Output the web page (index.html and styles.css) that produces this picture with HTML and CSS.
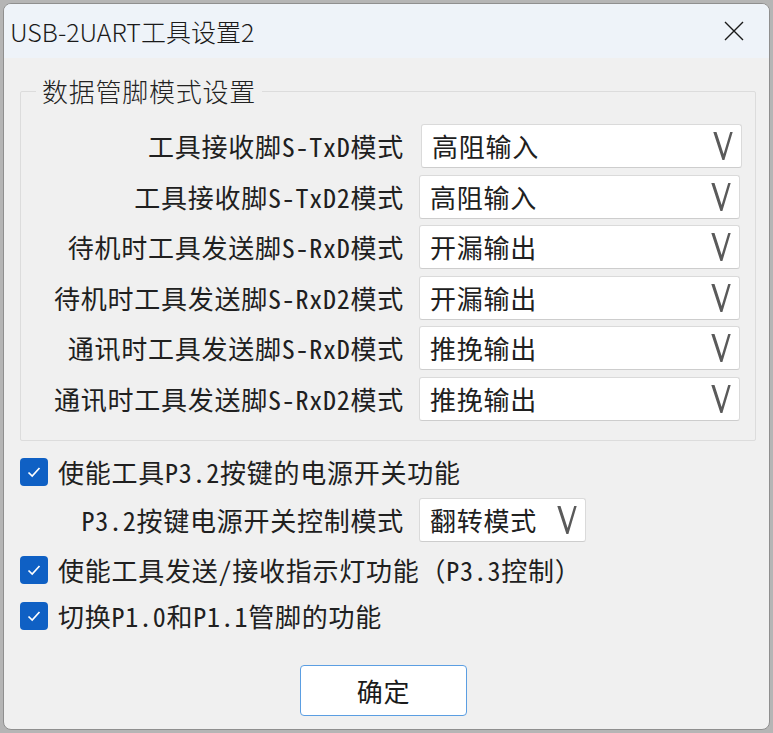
FILE: index.html
```html
<!DOCTYPE html>
<html lang="zh-CN">
<head>
<meta charset="utf-8">
<title>USB-2UART工具设置2</title>
<link rel="stylesheet" href="styles.css">
</head>
<body>
<div class="window">
  <header class="titlebar">
    <span class="title">USB-2UART工具设置2</span>
    <svg class="close" viewBox="0 0 20 20"><path d="M1 1 L19 19 M19 1 L1 19" stroke="#1a1a1a" stroke-width="1.4" fill="none"/></svg>
  </header>
  <main class="content">
    <fieldset class="group">
      <legend class="legend">数据管脚模式设置</legend>
      <div class="rows">
        <div class="row">
          <span class="label">工具接收脚S-TxD模式</span>
          <div class="combo wide shift"><span>高阻输入</span><svg class="chev" viewBox="0 0 20 28"><polygon points="0.3,0 3.5,0 10.6,22 17.2,0 19.7,0 11.4,28 9.4,28"/></svg></div>
        </div>
        <div class="row">
          <span class="label">工具接收脚S-TxD2模式</span>
          <div class="combo wide"><span>高阻输入</span><svg class="chev" viewBox="0 0 20 28"><polygon points="0.3,0 3.5,0 10.6,22 17.2,0 19.7,0 11.4,28 9.4,28"/></svg></div>
        </div>
        <div class="row">
          <span class="label">待机时工具发送脚S-RxD模式</span>
          <div class="combo wide"><span>开漏输出</span><svg class="chev" viewBox="0 0 20 28"><polygon points="0.3,0 3.5,0 10.6,22 17.2,0 19.7,0 11.4,28 9.4,28"/></svg></div>
        </div>
        <div class="row">
          <span class="label">待机时工具发送脚S-RxD2模式</span>
          <div class="combo wide"><span>开漏输出</span><svg class="chev" viewBox="0 0 20 28"><polygon points="0.3,0 3.5,0 10.6,22 17.2,0 19.7,0 11.4,28 9.4,28"/></svg></div>
        </div>
        <div class="row">
          <span class="label">通讯时工具发送脚S-RxD模式</span>
          <div class="combo wide"><span>推挽输出</span><svg class="chev" viewBox="0 0 20 28"><polygon points="0.3,0 3.5,0 10.6,22 17.2,0 19.7,0 11.4,28 9.4,28"/></svg></div>
        </div>
        <div class="row">
          <span class="label">通讯时工具发送脚S-RxD2模式</span>
          <div class="combo wide"><span>推挽输出</span><svg class="chev" viewBox="0 0 20 28"><polygon points="0.3,0 3.5,0 10.6,22 17.2,0 19.7,0 11.4,28 9.4,28"/></svg></div>
        </div>
      </div>
    </fieldset>
    <div class="options">
      <div class="check c1">
        <span class="box"><svg viewBox="0 0 28 28"><polyline points="8.5,14.5 12.2,18 19.5,10" fill="none" stroke="#fff" stroke-width="1.7"/></svg></span>
        <span class="text">使能工具P3.2按键的电源开关功能</span>
      </div>
      <div class="row sub">
        <span class="label">P3.2按键电源开关控制模式</span>
        <div class="combo narrow"><span>翻转模式</span><svg class="chev" viewBox="0 0 20 28"><polygon points="0.3,0 3.5,0 10.6,22 17.2,0 19.7,0 11.4,28 9.4,28"/></svg></div>
      </div>
      <div class="check c2">
        <span class="box"><svg viewBox="0 0 28 28"><polyline points="8.5,14.5 12.2,18 19.5,10" fill="none" stroke="#fff" stroke-width="1.7"/></svg></span>
        <span class="text">使能工具发送/接收指示灯功能（P3.3控制）</span>
      </div>
      <div class="check c3">
        <span class="box"><svg viewBox="0 0 28 28"><polyline points="8.5,14.5 12.2,18 19.5,10" fill="none" stroke="#fff" stroke-width="1.7"/></svg></span>
        <span class="text">切换P1.0和P1.1管脚的功能</span>
      </div>
    </div>
    <div class="actions">
      <button class="btn" type="button">确定</button>
    </div>
  </main>
</div>
</body>
</html>
```

FILE: styles.css
```css
body {
  margin: 0;
  background: #b5b5b5;
  font-family: "Noto Sans Mono CJK SC", "Noto Sans CJK SC", sans-serif;
  color: #1b1b1b;
}

.window {
  box-sizing: border-box;
  width: 767px;
  height: 727px;
  margin: 3px 0 0 3px;
  border: 1px solid #8f8f8f;
  border-radius: 8px;
  background: #f0f0f0;
  overflow: hidden;
  display: flex;
  flex-direction: column;
}

.titlebar {
  flex: none;
  height: 54px;
  background: #eef3f9;
  display: flex;
  align-items: center;
  justify-content: space-between;
  padding-left: 6px;
}

.title {
  font-family: "Noto Sans CJK SC", sans-serif;
  font-weight: 300;
  font-size: 25px;
  line-height: 30px;
  color: #1a1a1a;
}

.close {
  width: 20px;
  height: 20px;
  margin-right: 25px;
}

.content {
  flex: 1;
  padding-left: 16px;
}

.group {
  box-sizing: border-box;
  width: 736px;
  margin: 19px 0 0 0;
  padding: 19px 0 19px 0;
  border: 1px solid #dcdcdc;
  border-radius: 2px;
  min-inline-size: 0;
}

.legend {
  margin-left: 15px;
  padding: 0 6px;
  font-family: "Noto Sans CJK SC", sans-serif;
  font-weight: 300;
  font-size: 26px;
  letter-spacing: 0.75px;
  line-height: 28px;
  color: #222;
}

.rows {
  display: flex;
  flex-direction: column;
  gap: 6.5px;
}

.row {
  display: flex;
  align-items: center;
  height: 44px;
}

.label {
  width: 383px;
  margin-right: 15px;
  text-align: right;
  white-space: nowrap;
  font-size: 26px;
  letter-spacing: 0.75px;
  line-height: 30px;
  color: #202020;
}

.combo {
  box-sizing: border-box;
  height: 44px;
  background: #fff;
  border: 1px solid #dadada;
  border-bottom-color: #cdcdcd;
  border-radius: 3px;
  display: flex;
  align-items: center;
  justify-content: space-between;
  padding: 0 8px 0 10px;
  font-size: 26px;
  letter-spacing: 0.75px;
  line-height: 30px;
  white-space: nowrap;
  color: #202020;
}

.combo.wide {
  width: 321px;
}

.combo.shift {
  margin-left: 2px;
}

.combo.narrow {
  width: 167px;
}

.chev {
  flex: none;
  width: 20px;
  height: 28px;
  fill: #5a5a5a;
}

.options {
  display: flex;
  flex-direction: column;
}

.check {
  display: flex;
  align-items: center;
  height: 28px;
  gap: 10px;
}

.box {
  flex: none;
  width: 28px;
  height: 28px;
  border-radius: 4px;
  background: #0f60c4;
  display: flex;
}

.box svg {
  width: 28px;
  height: 28px;
}

.text {
  font-size: 26px;
  letter-spacing: 0.75px;
  line-height: 30px;
  white-space: nowrap;
  color: #202020;
}

.c1 {
  margin-top: 17px;
}

.sub {
  margin-top: 12px;
  padding-left: 1px;
}

.c2 {
  margin-top: 14px;
}

.c3 {
  margin-top: 18px;
}

.actions {
  margin-top: 35px;
  padding-left: 280px;
}

.btn {
  box-sizing: border-box;
  width: 167px;
  height: 51px;
  padding: 0;
  background: #fff;
  border: 1.5px solid #5b9ee2;
  border-radius: 4px;
  font-family: inherit;
  font-size: 26px;
  letter-spacing: 0.75px;
  color: #1b1b1b;
}
```
